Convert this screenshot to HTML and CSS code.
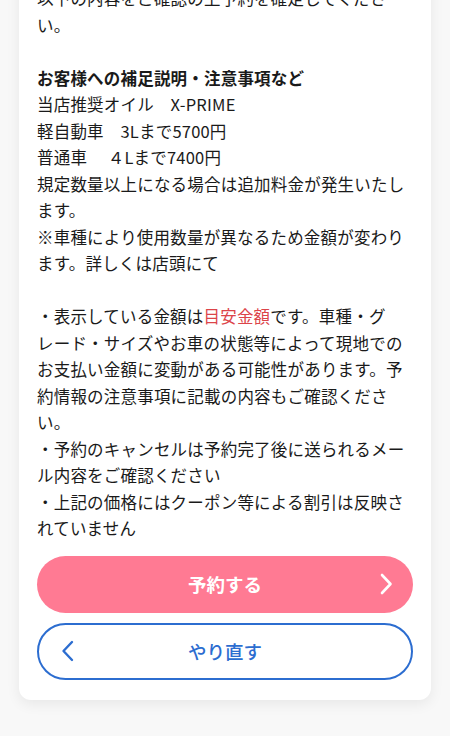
FILE: index.html
```html
<!DOCTYPE html>
<html lang="ja">
<head>
<meta charset="utf-8">
<link rel="stylesheet" href="styles.css">
</head>
<body>
<div class="page">
  <div class="card">
    <div class="notes">
      <p class="block">以下の内容をご確認の上予約を確定してくださ<br>い。</p>
      <p class="block"><span class="heading">お客様への補足説明・注意事項など</span><br>当店推奨オイル　X-PRIME<br>軽自動車　3Lまで5700円<br>普通車　 ４Lまで7400円<br>規定数量以上になる場合は追加料金が発生いたし<br>ます。<br>※車種により使用数量が異なるため金額が変わり<br>ます。詳しくは店頭にて</p>
      <p class="block">・表示している金額は<span class="red">目安金額</span>です。車種・グ<br>レード・サイズやお車の状態等によって現地での<br>お支払い金額に変動がある可能性があります。予<br>約情報の注意事項に記載の内容もご確認くださ<br>い。<br>・予約のキャンセルは予約完了後に送られるメー<br>ル内容をご確認ください<br>・上記の価格にはクーポン等による割引は反映さ<br>れていません</p>
    </div>
    <div class="actions">
      <button class="btn btn-primary" type="button">
        <span class="btn-label">予約する</span>
        <svg class="chev chev-right" width="14" height="22" viewBox="0 0 14 22"><path d="M3 2 L11.5 11 L3 20" fill="none" stroke="#fff" stroke-width="2.6" stroke-linecap="round" stroke-linejoin="round"/></svg>
      </button>
      <button class="btn btn-secondary" type="button">
        <svg class="chev chev-left" width="14" height="22" viewBox="0 0 14 22"><path d="M11 2 L2.5 11 L11 20" fill="none" stroke="#2c6dd0" stroke-width="2.4" stroke-linecap="round" stroke-linejoin="round"/></svg>
        <span class="btn-label">やり直す</span>
      </button>
    </div>
  </div>
</div>
</body>
</html>
```

FILE: styles.css
```css
html, body {
  margin: 0;
  padding: 0;
}
body {
  background: #f8f8f8;
  width: 450px;
  height: 736px;
  overflow: hidden;
  font-family: "Noto Sans CJK JP", "Noto Sans", sans-serif;
  color: #1a1a1a;
}
.page {
  padding: 0 19px;
}
.card {
  margin-top: -40px;
  background: #fff;
  border-radius: 12px;
  box-shadow: 0 4px 14px rgba(0, 0, 0, 0.07);
  padding: 25px 18px 20px;
}
.notes {
  font-size: 16.5px;
  line-height: 26.5px;
  letter-spacing: 0.2px;
  white-space: nowrap;
}
.block {
  margin: 0 0 26.5px;
}
.block:last-child {
  margin-bottom: 0;
}
.heading {
  font-weight: 700;
}
.red {
  color: #dc4449;
}
.actions {
  margin-top: 14px;
  display: flex;
  flex-direction: column;
  gap: 10px;
}
.btn {
  position: relative;
  display: flex;
  align-items: center;
  justify-content: center;
  height: 57px;
  border-radius: 29px;
  font-family: "Noto Sans CJK JP", "Noto Sans", sans-serif;
  font-size: 18.5px;
  padding: 0;
  cursor: pointer;
}
.btn-primary {
  background: #ff7a93;
  border: none;
  color: #fff;
  font-weight: 700;
}
.btn-secondary {
  background: #fff;
  border: 2px solid #2c6dd0;
  color: #2c6dd0;
  font-weight: 500;
}
.chev {
  position: absolute;
  top: 50%;
  margin-top: -11px;
}
.chev-right {
  right: 20px;
}
.chev-left {
  left: 22px;
}
```
